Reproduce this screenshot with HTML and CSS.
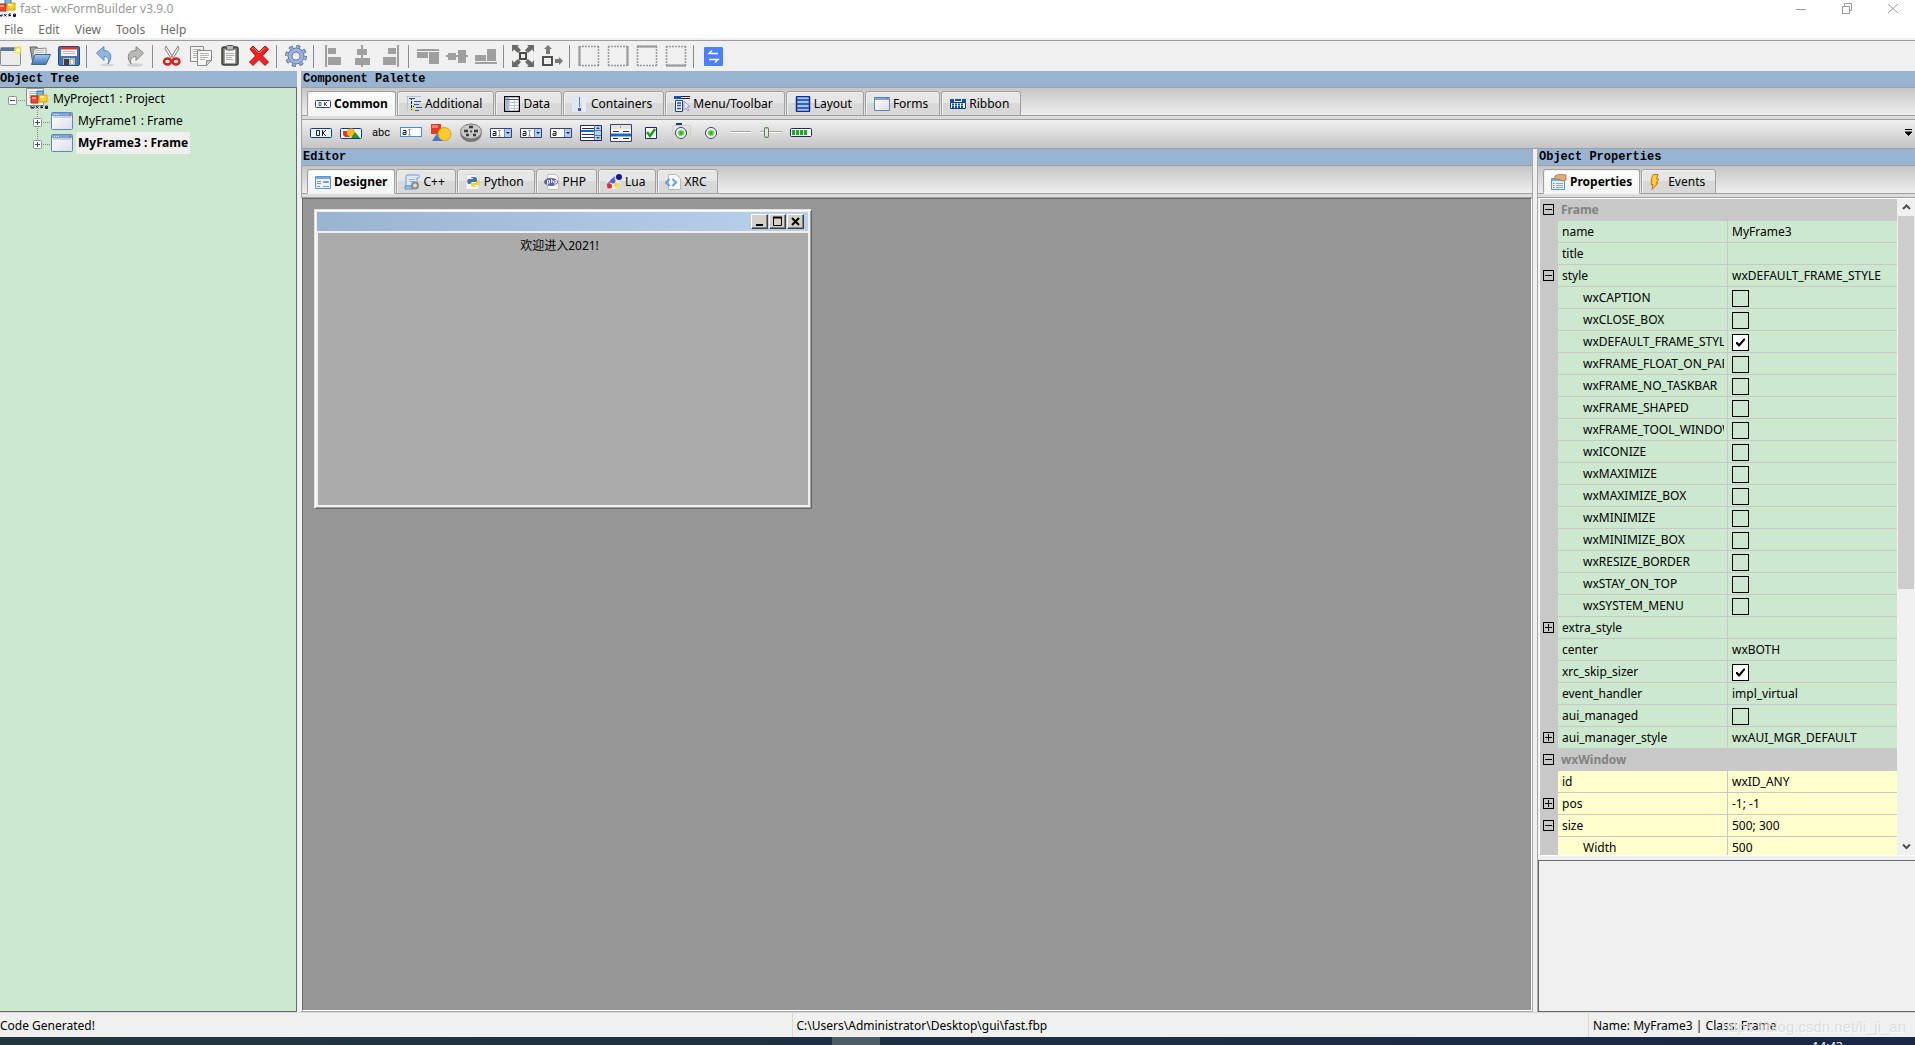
FILE: index.html
```html
<!DOCTYPE html>
<html lang="en">
<head>
<meta charset="utf-8">
<title>fast - wxFormBuilder v3.9.0</title>
<link rel="stylesheet" href="styles.css">
</head>
<body>
<svg class="defs" aria-hidden="true">
  <defs>
    <linearGradient id="gWin" x1="0" y1="0" x2="1" y2="1"><stop offset="0" stop-color="#fff"/><stop offset="1" stop-color="#dcdcec"/></linearGradient>
    <linearGradient id="gBlue" x1="0" y1="0" x2="0" y2="1"><stop offset="0" stop-color="#a9cbee"/><stop offset="1" stop-color="#3f75b5"/></linearGradient>
    <radialGradient id="gGreen"><stop offset="0" stop-color="#00b400"/><stop offset=".5" stop-color="#4fce40"/><stop offset="1" stop-color="#f4fff0"/></radialGradient>
  </defs>
  <symbol id="blocks" viewBox="0 0 22 22">
    <path d="M11 3h6v7h-6z" fill="#6fb4f0" stroke="#2b78c4"/><path d="M5 8h7v7H5z" fill="#ee4a32" stroke="#b7220f"/><path d="M13 7h8v7h-8z" fill="#fbd22c" stroke="#d99e0c"/><path d="M6 9h4v2H6z" fill="#ff9a86"/><path d="M14 8h4v2h-4z" fill="#fff3a0"/>
    <path d="M5 18v2h1.500v-1 1H8v-2M10 18l2.500 2.500M12.500 18L10 20.500M15 20.500V18h2M15 19.500h2M19.500 18v2.500h2V18h-2M20 19.500h2" fill="none" stroke="#101030"/>
  </symbol>
  <symbol id="project" viewBox="0 0 22 22">
    <path d="M.5.500h17v17H.500z" fill="#f4f4f4" stroke="#8f8f8f"/><path d="M3 3.500h11M3 5.500h8M3 7.500h9M3 9.500h5" stroke="#b5b5b5"/>
    <use href="#blocks" width="22" height="22"/>
  </symbol>
  <symbol id="frame" viewBox="0 0 22 18">
    <rect x=".5" y=".5" width="21" height="17" rx="1" fill="url(#gWin)" stroke="#5b86c4"/><path d="M1 1h20v3H1z" fill="#7ea6de"/><path d="M3 2.500h1M5 2.500h1M7 2.500h1" stroke="#dce9fa"/><path d="M18 2.500h2" stroke="#e2593f" stroke-width="2"/><path d="M2 5h18" stroke="#a9a9b5"/>
  </symbol>
  <symbol id="new" viewBox="0 0 22 22">
    <rect x=".5" y="2.500" width="20" height="18" rx="1" fill="#e9e9e9" stroke="#8b8d93"/><path d="M1 3h19v3H1z" fill="#54749c"/><path d="M2 7h17v12H2z" fill="#ebebea"/><circle cx="18" cy="5" r="4" fill="#f7ee4a" opacity=".75"/><circle cx="18" cy="5" r="2" fill="#ffffb0"/>
  </symbol>
  <symbol id="open" viewBox="0 0 22 22">
    <path d="M1 2h7l1 2h7v7L4 19z" fill="#a3a5a0" stroke="#5f615d"/><path d="M5 4l12-1v8H4z" fill="#f6f6f6" stroke="#8d8f8b"/><path d="M6 6l9-1M6 8l9-1" stroke="#b8b8b8"/><path d="M6 9.500h15.500L17 19.500H2.500z" fill="url(#gBlue)" stroke="#3465a4"/>
  </symbol>
  <symbol id="save" viewBox="0 0 22 22">
    <rect x=".5" y="1.500" width="21" height="19" rx="1.500" fill="#4673ae" stroke="#204a87"/><path d="M3 2h16v9H3z" fill="#f5f5f5"/><path d="M3 2h16v2.500H3z" fill="#e2352c"/><path d="M5 6.500h12M5 8.500h12" stroke="#bdbdbd"/><path d="M5 13h12v7H5z" fill="#b8bab5"/><path d="M6 14h5v6H6z" fill="#3c4147"/><path d="M13 15h2v4h-2z" fill="#eee"/>
  </symbol>
  <symbol id="undo" viewBox="0 0 22 22">
    <ellipse cx="12" cy="20" rx="7" ry="1.500" fill="#d4d4d4"/><path d="M1.500 8L9 1.500v4c7 0 9 7 4 13.500 1.500-5 0-7.500-4-7.500v4z" fill="#8fb6e2" stroke="#5a8ac3"/>
  </symbol>
  <symbol id="redo" viewBox="0 0 22 22">
    <ellipse cx="11" cy="20" rx="8" ry="1.700" fill="#cfcfcf"/><path d="M19.500 8L12 1.500v4C4 5.500 2 12 7 19c-1.500-5 1-7.500 5-7.500v4z" fill="#b9bbb7" stroke="#868884"/>
  </symbol>
  <symbol id="cut" viewBox="0 0 22 22">
    <path d="M5 1l8 13-2 1L4 4zM17 1L9 14l2 1 7-11z" fill="#e7e9e6" stroke="#8a8c88"/><ellipse cx="6.500" cy="16.500" rx="3.500" ry="3" fill="none" stroke="#dd1c1c" stroke-width="2.400"/><ellipse cx="15" cy="16.500" rx="3.500" ry="3" fill="none" stroke="#dd1c1c" stroke-width="2.400"/>
  </symbol>
  <symbol id="copy" viewBox="0 0 22 22">
    <path d="M.5 1.500h13v15H.500z" fill="#f3f3f2" stroke="#888a85"/><path d="M3 4.500h8M3 6.500h8M3 8.500h4M3 10.500h4M3 12.500h4" stroke="#b3b5b0"/><path d="M7.500 5.500h14v10l-5 5h-9z" fill="#f6f6f5" stroke="#888a85"/><path d="M10 8.500h9M10 10.500h9M10 12.500h8M10 14.500h5" stroke="#b3b5b0"/><path d="M21 15.500h-4.500V20" fill="#d0d2cd" stroke="#888a85"/>
  </symbol>
  <symbol id="paste" viewBox="0 0 22 22">
    <rect x="3" y="2" width="16" height="18" rx="2" fill="#70736e" stroke="#3f423d" stroke-width="1.500"/><path d="M5.500 4.500h11v14h-11z" fill="#f4f4f3" stroke="#9b9d99"/><path d="M7 8.500h8M7 10.500h8M7 12.500h6M7 14.500h7" stroke="#adafaa"/><rect x="7.500" y=".5" width="7" height="4.500" rx="1" fill="#b9bbb6" stroke="#50534e"/>
  </symbol>
  <symbol id="delete" viewBox="0 0 22 22">
    <path d="M2 4l3-3 6 6 6-6 3.500 3-6 7 6 6-3.500 3.500-6-6-6 6L1.500 17l6-6z" fill="#ee2222" stroke="#b80c0c"/><path d="M4 4l1.500-1.500 5.500 5.500 6-5.500" fill="none" stroke="#ff8a8a"/>
  </symbol>
  <symbol id="gear" viewBox="0 0 22 22">
    <circle cx="11" cy="11" r="9" fill="none" stroke="#5673a8" stroke-width="4" stroke-dasharray="3.770 3.300"/><circle cx="11" cy="11" r="6" fill="none" stroke="#5c78ac" stroke-width="5"/><circle cx="11" cy="11" r="6" fill="none" stroke="#9fb5da" stroke-width="3"/><circle cx="11" cy="11" r="9" fill="none" stroke="#9fb5da" stroke-width="2" stroke-dasharray="2.500 4.570" stroke-dashoffset="-.6"/>
  </symbol>
  <symbol id="al" viewBox="0 0 22 22"><path d="M3 0h2v22H3zM6 3h8v6H6zM6 12h13v8H6z" fill="#9f9f9f"/></symbol>
  <symbol id="ac" viewBox="0 0 22 22"><path d="M10 0h2v22h-2zM6 4h10v6H6zM4 13h15v7H4z" fill="#9f9f9f"/></symbol>
  <symbol id="ar" viewBox="0 0 22 22"><path d="M17 0h2v22h-2zM8 3h8v6H8zM3 12h13v8H3z" fill="#9f9f9f"/></symbol>
  <symbol id="at" viewBox="0 0 22 22"><path d="M0 4h22v2H0zM0 7h11v6H0zM12 7h10v12H12z" fill="#9f9f9f"/></symbol>
  <symbol id="am" viewBox="0 0 22 22"><path d="M0 10h22v2H0zM2 8h8v7H2zM12 5h8v13h-8z" fill="#9f9f9f"/></symbol>
  <symbol id="ab" viewBox="0 0 22 22"><path d="M0 17h22v2H0zM0 10h11v6H0zM12 4h9v12h-9z" fill="#9f9f9f"/></symbol>
  <symbol id="expand" viewBox="0 0 22 22"><path d="M0 0h7L5.500 1.500 9 5 6 8 2 4.500 0 7zM22 0v7l-2-2.500L16 8l-3-3 3.500-3.500L15 0zM0 22v-7l2 2.500L6 14l3 3-3.500 3.500L7 22zM22 22h-7l1.500-1.500L13 17l3-3 4 3.500 2-2.500z" fill="#6a6a67"/><path d="M8 8h6v6H8z" fill="#eee" stroke="#494946" stroke-width="2"/></symbol>
  <symbol id="stretch" viewBox="0 0 22 22"><path d="M2 12h9v8H2z" fill="none" stroke="#50504d" stroke-width="2"/><path d="M7 0l4 4H9v5H5V4H3zM22 16l-4 4v-2h-4v-4h4v-2z" fill="#7a7a77"/></symbol>
  <symbol id="dots" viewBox="0 0 22 22"><path d="M1 1.500h20M1 20.500h20M1.500 1v20M20.500 1v20" fill="none" stroke="#999" stroke-width="1.500" stroke-dasharray="2 1"/></symbol>
  <symbol id="bl" viewBox="0 0 22 22"><use href="#dots"/><path d="M1.500 1v20" stroke="#999" stroke-width="2"/></symbol>
  <symbol id="br" viewBox="0 0 22 22"><use href="#dots"/><path d="M20.500 1v20" stroke="#999" stroke-width="2"/></symbol>
  <symbol id="bt" viewBox="0 0 22 22"><use href="#dots"/><path d="M1 1.500h20" stroke="#999" stroke-width="2"/></symbol>
  <symbol id="bb" viewBox="0 0 22 22"><use href="#dots"/><path d="M1 20.500h20" stroke="#999" stroke-width="2"/></symbol>
  <symbol id="swap" viewBox="0 0 22 22"><rect x="2" y="2" width="19" height="19" rx="1" fill="#4d80f8"/><path d="M16 8.500H7l3-3M7 14.500h9l-3 3" fill="none" stroke="#fff" stroke-width="1.500"/></symbol>

  <symbol id="ok16" viewBox="0 0 16 16"><rect x=".5" y="4.500" width="15" height="7" rx="1" fill="#fff" stroke="#1d3f96"/><path d="M4 6.500h2v3H4zM9.500 6v4M12 6l-2 2 2 2" fill="none" stroke="#555"/></symbol>
  <symbol id="tree16" viewBox="0 0 16 16"><path d="M0 .5h15M1.500 0v15" stroke="#b5c4cf"/><path d="M3 2.500h6M8 5.500h7M8 8.500h5M10 11.500h6M9 14.500h4" stroke="#1d5a9e"/><path d="M5.500 3v12M5 6.500h2M5 10.500h3" stroke="#222" stroke-dasharray="1 1" fill="none"/><path d="M6 12h2v3H6z" fill="#e6dd3a"/></symbol>
  <symbol id="data16" viewBox="0 0 16 16"><path d="M.5.500h15v15H.500z" fill="#fff" stroke="#000" stroke-width="1.500"/><path d="M1.500 1.500h4v13h-4z" fill="#a9b5dc"/><path d="M1 3.500h14" stroke="#4e5a96"/><path d="M6 6.500h8M6 9.500h8M6 12.500h8M10.500 4v10" stroke="#b9c2de"/></symbol>
  <symbol id="cont16" viewBox="0 0 16 16"><path d="M0 0h9v16H0z" fill="#dfe7f3"/><path d="M10 0h4v16h-4z" fill="#e6ebf5"/><path d="M7.500 1v10" stroke="#5d7ec0"/><path d="M6 12h3v3H6z" fill="#3f5aa0"/></symbol>
  <symbol id="menu16" viewBox="0 0 16 16"><path d="M0 0h7v3H0z" fill="#0a50c8"/><path d="M7 .500h9M7 2.500h9" stroke="#223"/><path d="M1.500 4.500h7v11h-7z" fill="#fff" stroke="#2e3f78"/><path d="M3 7h4M3 9.500h4M3 12.500h4" stroke="#0a50c8" stroke-width="1.500"/><path d="M10 5v9l2-2 2 3 1-1-2-3h3z" fill="#f3f3fb" stroke="#9a9ad0"/></symbol>
  <symbol id="lay16" viewBox="0 0 16 16"><rect x="1.500" y=".5" width="13" height="15" rx="1" fill="#a9c3f4" stroke="#0a2f8c" stroke-width="1.500"/><path d="M2 4h12M2 8h12M2 12h12" stroke="#0d3fae" stroke-width="1.500"/></symbol>
  <symbol id="form16" viewBox="0 0 16 16"><path d="M.5 1.500h15v13H.500z" fill="url(#gWin)" stroke="#5b86c4"/><path d="M1 2h14v2H1z" fill="#7ea6de"/><path d="M12 2.500h2" stroke="#e2593f"/></symbol>
  <symbol id="rib16" viewBox="0 0 16 16"><path d="M0 3h4v3H0zM5 3h6v2H5zM12 3h4v3h-4z" fill="#0a50b8"/><path d="M.5 6.500h15v6H.500z" fill="#fff" stroke="#14397c"/><path d="M2 8.500h12M2 11h12" stroke="#0a50b8" stroke-width="2" stroke-dasharray="2 1"/></symbol>
  <symbol id="des16" viewBox="0 0 16 16"><path d="M.5 2.500h15v12H.500z" fill="#eef4fc" stroke="#5e94cf"/><path d="M1 3h14v2H1z" fill="#75a8e0"/><path d="M2 7.500h4M2 9.500h4M2 12.500h3" stroke="#7e97bb"/><path d="M8.500 7.500h5v1h-5zM8 12.500h6" fill="none" stroke="#6fa0dc"/></symbol>
  <symbol id="cpp16" viewBox="0 0 16 16"><path d="M3 1h11c2 0 2 3 0 3h-1v8H2V3c0-1 0-2 1-2z" fill="#d8e8f7" stroke="#6b9dcc"/><path d="M1 12h8v3H1z" fill="#9cc3e8" stroke="#5d8fc4"/><path d="M5 5.500h6M5 7.500h6" stroke="#92b4d6"/><circle cx="11" cy="11.500" r="3" fill="#ddd" stroke="#8b8b8b" stroke-width="2"/></symbol>
  <symbol id="py16" viewBox="0 0 16 16"><path d="M1 .5h9l4 4v11H1z" fill="#f7f7f7" stroke="#d2d2d2"/><path d="M6 3h4c1 0 2 1 2 2v3H7L5 10H3c-1-2-1-4 0-5h5V4H6z" fill="#3b74a8"/><path d="M11 13H8c-1 0-2-1-2-2V9h5l1-3h2c1 2 1 4 0 5H9v1h2z" fill="#f8ce3e"/></symbol>
  <symbol id="php16" viewBox="0 0 16 16"><path d="M3.500.5h8l3 3v12h-11z" fill="#f7f7f7" stroke="#bfbfbf"/><ellipse cx="7" cy="8" rx="7" ry="4" fill="#5a62a6"/><path d="M3.500 11V6.500h2v2.500h-2M7.500 5v4M7.500 7h2v2M11 11V6.500h1.500V9H11" fill="none" stroke="#e8e8f8"/></symbol>
  <symbol id="lua16" viewBox="0 0 16 16"><circle cx="7" cy="9" r="6.500" fill="#ececec"/><path d="M1 11L9 3" stroke="#9a6dd0" stroke-width="2"/><circle cx="13" cy="3" r="3" fill="#16168c"/><circle cx="3.500" cy="12" r="2.500" fill="#ee2a2a"/><circle cx="7" cy="7" r="2.500" fill="#4c62e8"/><circle cx="10.500" cy="11" r="2.500" fill="#f5dd2a"/></symbol>
  <symbol id="xrc16" viewBox="0 0 16 16"><path d="M3.500.5h8l4 4v11h-12z" fill="#f8f8f8" stroke="#b8b8b8"/><path d="M4.500 5L1 8.500 4.500 12M7.500 5L11 8.500 7.500 12" fill="none" stroke="#5ba3e0" stroke-width="2"/></symbol>
  <symbol id="prop16" viewBox="0 0 16 16"><path d="M.5 4.500h13v11H.500z" fill="#edf4fc" stroke="#5a93cf"/><path d="M1 5h12v2H1z" fill="#78aadf"/><path d="M5 9.500h7M5 11.500h7M5 13.500h7" stroke="#88a7c9"/><path d="M2 9.500h1.500M2 13.500h1.500" stroke="#35a04a"/><path d="M2 11.500h1.500" stroke="#d04a35"/><path d="M4 2l4-2 7 1v5l-4 1-3-2-4 0z" fill="#dfae78" stroke="#a8743e" stroke-width=".8"/></symbol>
  <symbol id="ev16" viewBox="0 0 16 16"><path d="M4 .5h5L7.500 5H10L7 9h2l-6 6.500 1-5H2l1-4H2z" fill="#fbd530" stroke="#d66a1c"/></symbol>

  <symbol id="pOk" viewBox="0 0 22 22"><rect x=".5" y="6.500" width="21" height="9" rx="1" fill="#eef5ff" stroke="#0d3a8f"/><path d="M6.500 8.500h3v5h-3zM12.500 8v6M16 8l-3 3 3 3" fill="none" stroke="#222"/></symbol>
  <symbol id="pBmp" viewBox="0 0 22 22"><rect x=".5" y="6.500" width="21" height="10" rx="1" fill="#eef5ff" stroke="#0d3a8f"/><path d="M3 9h7v6H5l-2-2z" fill="#e23a1e"/><circle cx="11" cy="10.500" r="4" fill="#f8b81e"/><path d="M11 16l4-6 5 6z" fill="#1f9c2b"/></symbol>
  <symbol id="pTxt" viewBox="0 0 22 22"><rect x=".5" y="5.500" width="21" height="9" fill="#fff" stroke="#3f94d8"/><path d="M3 8.500h3v4H3v-2h3" fill="none" stroke="#222"/><path d="M8 7.500h3M9.500 8v5M8 13h3" stroke="#999" fill="none"/></symbol>
  <symbol id="pImg" viewBox="0 0 22 22"><path d="M1 2h10v10H1z" fill="#e8381f"/><path d="M2 3h6v3H2z" fill="#f4806c"/><path d="M2 19l6-9 6 9z" fill="#4a78c8"/><circle cx="14.500" cy="12" r="6.500" fill="#fccb2e" stroke="#d99e18"/></symbol>
  <symbol id="pReel" viewBox="0 0 22 22"><ellipse cx="11" cy="12.500" rx="10.500" ry="7.500" fill="#777"/><ellipse cx="11" cy="9.500" rx="10.500" ry="7.500" fill="#c9c9c9" stroke="#777"/><path d="M4 9h4M14 9h4M9 5h4M6 13h3M13 13h3" stroke="#3a3a3a" stroke-width="2.500"/><circle cx="11" cy="9.500" r="1" fill="#333"/></symbol>
  <symbol id="pCmb" viewBox="0 0 22 22"><path d="M.5 6.500h21v9H.500z" fill="#fff" stroke="#3b3f78"/><path d="M3 9.500h3v4H3v-2h3" fill="none" stroke="#222"/><path d="M8 8.500h3M9.500 9v5M8 14h3" stroke="#999" fill="none"/><path d="M15 7h6v8h-6z" fill="#a9cdf0"/><path d="M14.500 7v8" stroke="#6a90bc"/><path d="M16 10h4l-2 2z" fill="#222"/></symbol>
  <symbol id="pCho" viewBox="0 0 22 22"><path d="M.5 6.500h21v9H.500z" fill="#fff" stroke="#3b3f78"/><path d="M3 9.500h3v4H3v-2h3" fill="none" stroke="#222"/><path d="M15 7h6v8h-6z" fill="#a9cdf0"/><path d="M14.500 7v8" stroke="#6a90bc"/><path d="M16 10h4l-2 2z" fill="#222"/></symbol>
  <symbol id="pLst" viewBox="0 0 22 22"><path d="M.5 3.500h21v15H.500z" fill="#fff" stroke="#23285e"/><path d="M2 6.500h12M2 12.500h12M2 15.500h12" stroke="#23285e"/><path d="M1 9h13" stroke="#0d6ad0" stroke-width="2"/><path d="M15 4h6v14h-6z" fill="#b4d3ee"/><path d="M14.500 3v15M15 8.500h6M15 13.500h6" stroke="#5a7aa6"/><path d="M16 7l2-2 2 2zM16 15l2 2 2-2z" fill="#444"/></symbol>
  <symbol id="pLct" viewBox="0 0 22 22"><path d="M.5 2.500h21v17H.500z" fill="#fff" stroke="#3b3f78"/><path d="M1 3h20v4H1z" fill="#e9e5d4"/><path d="M1 13h20" stroke="#0d6ad0" stroke-width="3"/><path d="M3 9.500h6M13 9.500h6M3 16.500h5M13 16.500h6" stroke="#333"/><path d="M10.500 4v2" stroke="#998"/></symbol>
  <symbol id="pChk" viewBox="0 0 22 22"><path d="M5.500 5.500h11v11h-11z" fill="#fff" stroke="#23285e"/><path d="M7 10l3 4 5-7" fill="none" stroke="#12a012" stroke-width="2.500"/></symbol>
  <symbol id="pRbx" viewBox="0 0 22 22"><rect x="2.500" y="3.500" width="18" height="16" rx="2" fill="none" stroke="#d3d1bd"/><path d="M6 1h6v2H6z" fill="#0d3a8f"/><circle cx="11" cy="11" r="5.500" fill="#fff" stroke="#3d3f66"/><circle cx="11" cy="11" r="4" fill="url(#gGreen)"/></symbol>
  <symbol id="pRad" viewBox="0 0 22 22"><circle cx="11" cy="11" r="5.500" fill="#fff" stroke="#3d3f66"/><circle cx="11" cy="11" r="4" fill="url(#gGreen)"/></symbol>
  <symbol id="pLin" viewBox="0 0 22 22"><path d="M1 9.500h20" stroke="#a7a596"/><path d="M1 10.500h20" stroke="#fff"/></symbol>
  <symbol id="pSld" viewBox="0 0 22 22"><path d="M0 9.500h22" stroke="#aaa896"/><path d="M0 10.500h21" stroke="#fffde8"/><rect x="4.500" y="5.500" width="4" height="10" rx="1" fill="#e4e4d8" stroke="#6d7466"/><path d="M5 6h3M5 15h3" stroke="#35b52f"/></symbol>
  <symbol id="pGau" viewBox="0 0 22 22"><rect x=".5" y="6.500" width="21" height="8" rx="1" fill="#fff" stroke="#23285e"/><path d="M2 10.500h16" stroke="#19b019" stroke-width="5" stroke-dasharray="3 1"/></symbol>
</svg>

<div class="app">
  <header class="titlebar">
    <svg class="i22"><use href="#blocks"/></svg>
    <h1 class="title">fast - wxFormBuilder v3.9.0</h1>
    <div class="winctl">
      <button aria-label="Minimize"><svg width="12" height="12"><path d="M1 7.500h10" stroke="#999"/></svg></button>
      <button aria-label="Restore"><svg width="12" height="12" fill="none" stroke="#999"><path d="M1.500 4.500h7v7h-7zM3.500 4V1.500h7v7H9"/></svg></button>
      <button aria-label="Close"><svg width="12" height="12"><path d="M1 2l10 9M11 2L1 11" stroke="#999"/></svg></button>
    </div>
  </header>
  <nav class="menubar">
    <button>File</button><button>Edit</button><button>View</button><button>Tools</button><button>Help</button>
  </nav>
  <div class="toolbar" role="toolbar">
    <button aria-label="New"><svg class="i22"><use href="#new"/></svg></button>
    <button aria-label="Open"><svg class="i22"><use href="#open"/></svg></button>
    <button aria-label="Save"><svg class="i22"><use href="#save"/></svg></button>
    <i class="sep"></i>
    <button aria-label="Undo"><svg class="i22"><use href="#undo"/></svg></button>
    <button aria-label="Redo"><svg class="i22"><use href="#redo"/></svg></button>
    <i class="sep"></i>
    <button aria-label="Cut"><svg class="i22"><use href="#cut"/></svg></button>
    <button aria-label="Copy"><svg class="i22"><use href="#copy"/></svg></button>
    <button aria-label="Paste"><svg class="i22"><use href="#paste"/></svg></button>
    <button aria-label="Delete"><svg class="i22"><use href="#delete"/></svg></button>
    <i class="sep"></i>
    <button aria-label="Generate code"><svg class="i22"><use href="#gear"/></svg></button>
    <i class="sep"></i>
    <button aria-label="Align left"><svg class="i22"><use href="#al"/></svg></button>
    <button aria-label="Align center horizontally"><svg class="i22"><use href="#ac"/></svg></button>
    <button aria-label="Align right"><svg class="i22"><use href="#ar"/></svg></button>
    <i class="sep"></i>
    <button aria-label="Align top"><svg class="i22"><use href="#at"/></svg></button>
    <button aria-label="Align center vertically"><svg class="i22"><use href="#am"/></svg></button>
    <button aria-label="Align bottom"><svg class="i22"><use href="#ab"/></svg></button>
    <i class="sep"></i>
    <button aria-label="Expand"><svg class="i22"><use href="#expand"/></svg></button>
    <button aria-label="Stretch"><svg class="i22"><use href="#stretch"/></svg></button>
    <i class="sep"></i>
    <button aria-label="Left border"><svg class="i22"><use href="#bl"/></svg></button>
    <button aria-label="Right border"><svg class="i22"><use href="#br"/></svg></button>
    <button aria-label="Top border"><svg class="i22"><use href="#bt"/></svg></button>
    <button aria-label="Bottom border"><svg class="i22"><use href="#bb"/></svg></button>
    <i class="sep"></i>
    <button aria-label="Swap"><svg class="i22"><use href="#swap"/></svg></button>
  </div>

  <main class="work">
    <section class="side">
      <h2 class="caption">Object Tree</h2>
      <ul class="tree">
        <li>
          <div class="node">
            <svg class="twig" width="26" height="22"><path d="M18 12.500h8" class="dot"/><rect x="8.500" y="8.500" width="8" height="8" rx="1" class="exp"/><path d="M10 12.500h5" class="sign"/></svg>
            <svg class="i22"><use href="#project"/></svg><span class="label">MyProject1 : Project</span>
          </div>
          <ul>
            <li class="node">
              <svg class="twig" width="26" height="22"><path d="M12.500 0v22M18 12.500h8" class="dot"/><rect x="8.500" y="8.500" width="8" height="8" rx="1" class="exp"/><path d="M10 12.500h5M12.500 10v5" class="sign"/></svg>
              <svg class="i18"><use href="#frame"/></svg><span class="label">MyFrame1 : Frame</span>
            </li>
            <li class="node">
              <svg class="twig" width="26" height="22"><path d="M12.500 0v8M18 12.500h8" class="dot"/><rect x="8.500" y="8.500" width="8" height="8" rx="1" class="exp"/><path d="M10 12.500h5M12.500 10v5" class="sign"/></svg>
              <svg class="i18"><use href="#frame"/></svg><span class="label selected">MyFrame3 : Frame</span>
            </li>
          </ul>
        </li>
      </ul>
    </section>

    <div class="center">
      <section>
        <h2 class="caption">Component Palette</h2>
        <div class="tabs roomy" role="tablist">
          <button class="tab on" role="tab"><svg class="i16"><use href="#ok16"/></svg>Common</button>
          <button class="tab" role="tab"><svg class="i16"><use href="#tree16"/></svg>Additional</button>
          <button class="tab" role="tab"><svg class="i16"><use href="#data16"/></svg>Data</button>
          <button class="tab" role="tab"><svg class="i16"><use href="#cont16"/></svg>Containers</button>
          <button class="tab" role="tab"><svg class="i16"><use href="#menu16"/></svg>Menu/Toolbar</button>
          <button class="tab" role="tab"><svg class="i16"><use href="#lay16"/></svg>Layout</button>
          <button class="tab" role="tab"><svg class="i16"><use href="#form16"/></svg>Forms</button>
          <button class="tab" role="tab"><svg class="i16"><use href="#rib16"/></svg>Ribbon</button>
        </div>
        <div class="palette" role="toolbar">
          <button aria-label="Button"><svg class="i22"><use href="#pOk"/></svg></button>
          <button aria-label="Bitmap button"><svg class="i22"><use href="#pBmp"/></svg></button>
          <button class="abc">abc</button>
          <button aria-label="Text control"><svg class="i22"><use href="#pTxt"/></svg></button>
          <button aria-label="Static bitmap"><svg class="i22"><use href="#pImg"/></svg></button>
          <button aria-label="Animation"><svg class="i22"><use href="#pReel"/></svg></button>
          <button aria-label="Combo box"><svg class="i22"><use href="#pCmb"/></svg></button>
          <button aria-label="Bitmap combo box"><svg class="i22"><use href="#pCmb"/></svg></button>
          <button aria-label="Choice"><svg class="i22"><use href="#pCho"/></svg></button>
          <button aria-label="List box"><svg class="i22"><use href="#pLst"/></svg></button>
          <button aria-label="List control"><svg class="i22"><use href="#pLct"/></svg></button>
          <button aria-label="Check box"><svg class="i22"><use href="#pChk"/></svg></button>
          <button aria-label="Radio box"><svg class="i22"><use href="#pRbx"/></svg></button>
          <button aria-label="Radio button"><svg class="i22"><use href="#pRad"/></svg></button>
          <button aria-label="Static line"><svg class="i22"><use href="#pLin"/></svg></button>
          <button aria-label="Slider"><svg class="i22"><use href="#pSld"/></svg></button>
          <button aria-label="Gauge"><svg class="i22"><use href="#pGau"/></svg></button>
          <button class="more" aria-label="More"><svg width="8" height="8"><path d="M0 .500h7M0 3h7L3.500 6.500z" stroke="#000" stroke-width="1"/></svg></button>
        </div>
      </section>

      <div class="split">
        <section class="editor">
          <h2 class="caption">Editor</h2>
          <div class="tabs" role="tablist">
            <button class="tab on" role="tab"><svg class="i16"><use href="#des16"/></svg>Designer</button>
            <button class="tab" role="tab"><svg class="i16"><use href="#cpp16"/></svg>C++</button>
            <button class="tab" role="tab"><svg class="i16"><use href="#py16"/></svg>Python</button>
            <button class="tab" role="tab"><svg class="i16"><use href="#php16"/></svg>PHP</button>
            <button class="tab" role="tab"><svg class="i16"><use href="#lua16"/></svg>Lua</button>
            <button class="tab" role="tab"><svg class="i16"><use href="#xrc16"/></svg>XRC</button>
          </div>
          <div class="canvas">
            <div class="preview">
              <div class="preview-bar">
                <button aria-label="Minimize"><svg width="11" height="11"><path d="M1 9h7" stroke="#000" stroke-width="2"/></svg></button>
                <button aria-label="Maximize"><svg width="11" height="11"><path d="M.5 1.500h8v8h-8z" fill="none" stroke="#000"/><path d="M0 1.500h9" stroke="#000" stroke-width="2"/></svg></button>
                <button aria-label="Close"><svg width="11" height="11"><path d="M1 2l7 7M8 2L1 9" stroke="#000" stroke-width="2"/></svg></button>
              </div>
              <div class="preview-body">欢迎进入2021!</div>
            </div>
          </div>
        </section>

        <section class="props">
          <h2 class="caption">Object Properties</h2>
          <div class="tabs" role="tablist">
            <button class="tab on" role="tab"><svg class="i16"><use href="#prop16"/></svg>Properties</button>
            <button class="tab" role="tab"><svg class="i16"><use href="#ev16"/></svg>Events</button>
          </div>
          <div class="gridwrap">
            <div class="gridclip">
              <table class="grid">
                <colgroup><col class="c-gut"><col class="c-name"><col></colgroup>
                <tbody>
                  <tr class="cat"><td><i class="box"></i></td><th colspan="2">Frame</th></tr>
                  <tr><td></td><th>name</th><td>MyFrame3</td></tr>
                  <tr><td></td><th>title</th><td></td></tr>
                  <tr><td><i class="box"></i></td><th>style</th><td>wxDEFAULT_FRAME_STYLE</td></tr>
                  <tr class="sub"><td></td><th><label for="s1">wxCAPTION</label></th><td><input type="checkbox" id="s1"></td></tr>
                  <tr class="sub"><td></td><th><label for="s2">wxCLOSE_BOX</label></th><td><input type="checkbox" id="s2"></td></tr>
                  <tr class="sub"><td></td><th><label for="s3">wxDEFAULT_FRAME_STYLE</label></th><td><input type="checkbox" id="s3" checked></td></tr>
                  <tr class="sub"><td></td><th><label for="s4">wxFRAME_FLOAT_ON_PARENT</label></th><td><input type="checkbox" id="s4"></td></tr>
                  <tr class="sub"><td></td><th><label for="s5">wxFRAME_NO_TASKBAR</label></th><td><input type="checkbox" id="s5"></td></tr>
                  <tr class="sub"><td></td><th><label for="s6">wxFRAME_SHAPED</label></th><td><input type="checkbox" id="s6"></td></tr>
                  <tr class="sub"><td></td><th><label for="s7">wxFRAME_TOOL_WINDOW</label></th><td><input type="checkbox" id="s7"></td></tr>
                  <tr class="sub"><td></td><th><label for="s8">wxICONIZE</label></th><td><input type="checkbox" id="s8"></td></tr>
                  <tr class="sub"><td></td><th><label for="s9">wxMAXIMIZE</label></th><td><input type="checkbox" id="s9"></td></tr>
                  <tr class="sub"><td></td><th><label for="s10">wxMAXIMIZE_BOX</label></th><td><input type="checkbox" id="s10"></td></tr>
                  <tr class="sub"><td></td><th><label for="s11">wxMINIMIZE</label></th><td><input type="checkbox" id="s11"></td></tr>
                  <tr class="sub"><td></td><th><label for="s12">wxMINIMIZE_BOX</label></th><td><input type="checkbox" id="s12"></td></tr>
                  <tr class="sub"><td></td><th><label for="s13">wxRESIZE_BORDER</label></th><td><input type="checkbox" id="s13"></td></tr>
                  <tr class="sub"><td></td><th><label for="s14">wxSTAY_ON_TOP</label></th><td><input type="checkbox" id="s14"></td></tr>
                  <tr class="sub"><td></td><th><label for="s15">wxSYSTEM_MENU</label></th><td><input type="checkbox" id="s15"></td></tr>
                  <tr><td><i class="box plus"></i></td><th>extra_style</th><td></td></tr>
                  <tr><td></td><th>center</th><td>wxBOTH</td></tr>
                  <tr><td></td><th><label for="p1">xrc_skip_sizer</label></th><td><input type="checkbox" id="p1" checked></td></tr>
                  <tr><td></td><th>event_handler</th><td>impl_virtual</td></tr>
                  <tr><td></td><th><label for="p2">aui_managed</label></th><td><input type="checkbox" id="p2"></td></tr>
                  <tr><td><i class="box plus"></i></td><th>aui_manager_style</th><td>wxAUI_MGR_DEFAULT</td></tr>
                </tbody>
                <tbody class="win">
                  <tr class="cat"><td><i class="box"></i></td><th colspan="2">wxWindow</th></tr>
                  <tr><td></td><th>id</th><td>wxID_ANY</td></tr>
                  <tr><td><i class="box plus"></i></td><th>pos</th><td>-1; -1</td></tr>
                  <tr><td><i class="box"></i></td><th>size</th><td>500; 300</td></tr>
                  <tr class="sub"><td></td><th>Width</th><td>500</td></tr>
                </tbody>
              </table>
            </div>
            <div class="scroll">
              <button aria-label="Scroll up"><svg width="9" height="7"><path d="M1 5l3.500-3.500L8 5" fill="none" stroke="#505050" stroke-width="2"/></svg></button>
              <div class="track"><div class="thumb"></div></div>
              <button aria-label="Scroll down"><svg width="9" height="7"><path d="M1 1.500L4.500 5 8 1.500" fill="none" stroke="#505050" stroke-width="2"/></svg></button>
            </div>
          </div>
          <div class="desc"></div>
        </section>
      </div>
    </div>
  </main>

  <footer class="status">
    <span>Code Generated!</span>
    <span>C:\Users\Administrator\Desktop\gui\fast.fbp</span>
    <span>Name: MyFrame3 | Class: Frame</span>
    <div class="watermark">https://blog.csdn.net/li_ji_an</div>
  </footer>
  <div class="taskbar"><i class="task"></i><span class="clock">14:43</span></div>
</div>
</body>
</html>
```
FILE: styles.css
```css
* { box-sizing: border-box; }

body {
  margin: 0;
  font: 12px/16px "Noto Sans", "Noto Sans CJK SC", sans-serif;
  color: #000;
  background: #f0f0f0;
}

button {
  margin: 0;
  padding: 0;
  border: 0;
  background: none;
  font: inherit;
  color: inherit;
}

ul { margin: 0; padding: 0; list-style: none; }
svg { flex: none; display: block; }
.defs { position: absolute; width: 0; height: 0; }
.i22 { width: 22px; height: 22px; }
.i18 { width: 22px; height: 18px; }
.i16 { width: 16px; height: 16px; }

.app { display: flex; flex-direction: column; height: 100vh; overflow: hidden; }

/* Title bar and menu */
.titlebar { display: flex; align-items: center; height: 18px; padding-right: 16px; background: #fff; color: #999; }
.titlebar > svg { margin: -4px 4px 0 -6px; }
.title { flex: 1; margin: 0; font-size: 12px; font-weight: 400; }
.winctl { display: flex; gap: 34px; margin-top: -2px; }
.menubar { display: flex; height: 22px; padding: 3px 4px 0; gap: 15px; background: #fff; color: #6a6a6a; border-bottom: 2px solid #f0f0f0; }

/* Main toolbar */
.toolbar { display: flex; height: 31px; border-top: 1px solid #9c9c9c; margin-left: -4px; }
.toolbar button { width: 29px; display: grid; place-items: center; }
.sep { width: 8px; padding: 4px 3px; }
.sep::before { content: ""; display: block; height: 23px; border-left: 1px solid #8c8c8c; }

/* Docked panes */
.work { flex: 1; display: flex; gap: 4px; min-height: 0; }
.side { width: 297px; display: flex; flex-direction: column; }
.center { flex: 1; display: flex; flex-direction: column; min-width: 0; }
.split { flex: 1; display: flex; gap: 4px; min-height: 0; }
.editor { flex: 1; display: flex; flex-direction: column; border: solid #a8a8a8; border-width: 0 1px 1px 0; }
.props { width: 378px; display: flex; flex-direction: column; border-left: 1px solid #a8a8a8; }
.caption { margin: 0; height: 16px; background: #99b4d1; font: bold 12px/16px "Liberation Mono", monospace; }
.center .caption { padding-left: 2px; }
.center .props .caption { padding-left: 1px; }

/* Object tree */
.tree { flex: 1; background: #cce8cf; border: solid #696969; border-width: 1px 1px 1px 0; }
.tree ul { padding-left: 25px; }
.node { display: flex; align-items: center; height: 22px; }
.label { padding: 3px 2px; margin-left: 3px; }
.selected { background: #f0f0f0; font-weight: 700; }
.dot { stroke: #888; stroke-dasharray: 1 1; }
.exp { fill: #fbfbfb; stroke: #919191; }
.sign { stroke: #3a4a9c; }

/* Notebook tabs */
.tabs {
  display: flex;
  height: 33px;
  padding: 3px 5px 0;
  gap: 1px;
  border: solid #a0a0a0;
  border-width: 1px 0 1px 1px;
  background: linear-gradient(#a0a0a0, #a0a0a0) 0 27px / 100% 1px no-repeat, linear-gradient(#c6c6c6, #eee 27px, #dcdcdc 28px);
}
.props .tabs { border-left: 0; }
.tab {
  display: flex;
  align-items: center;
  gap: 3px;
  height: 25px;
  padding: 0 10px 0 7px;
  border: 1px solid #a0a0a0;
  border-radius: 3px 3px 0 0;
  background: linear-gradient(#e6e6e6 50%, #d8d8d8 50%);
  box-shadow: inset 1px 1px #f0f0f0;
}
.roomy .tab { padding: 0 11px 0 8px; }
.tabs .tab.on { padding: 0 7px; background: linear-gradient(#fff, #f4f4f4); font-weight: 700; border-bottom-color: #f4f4f4; }

.palette {
  display: flex;
  height: 29px;
  padding: 0 2px 2px 4px;
  border: solid #a0a0a0;
  border-width: 0 0 1px 1px;
  background: linear-gradient(#f0f0f0, #c4c4c4);
}
.palette button { width: 30px; display: grid; place-items: center; }
.palette .abc { font: 11px/16px Roboto, sans-serif; }
.palette .more { width: 8px; margin-left: auto; }

/* Designer canvas */
.canvas { flex: 1; margin-left: 1px; padding: 10px 11px; background: #969696; border: solid; border-width: 1px; border-color: #696969 #fff #fff #696969; }
.preview {
  width: 493px;
  max-width: 100%;
  height: 300px;
  display: flex;
  flex-direction: column;
  padding: 1px 2px 2px 1px;
  border: 1px solid;
  border-color: #e3e3e3 #696969 #696969 #e3e3e3;
  background: #f0f0f0;
  box-shadow: inset 1px 1px #fff, inset -1px -1px #a0a0a0;
  box-sizing: content-box;
  height: 295px;
}
.preview-bar { display: flex; justify-content: flex-end; gap: 1px; height: 20px; margin: 1px; padding: 2px 4px; background: linear-gradient(90deg, #99b4d1, #b9d1ea); border-bottom: 1px solid #f0f0f0; }
.preview-bar button { width: 17px; height: 15px; padding: 1px 3px; background: #d4d0c8; border: 1px solid; border-color: #fff #404040 #404040 #fff; box-shadow: inset -1px -1px #808080; }
.preview-body { flex: 1; margin: 0 1px 1px 2px; padding: 5px 12px 5px 5px; background: #ababab; text-align: center; }

/* Property grid */
.gridwrap { flex: 1; display: flex; min-height: 0; margin-left: 1px; border: solid #fff; border-width: 1px 0 1px 1px; background: #f0f0f0; }
.gridclip { flex: 1; overflow: hidden; background: #c8c8c8; }
.grid { width: 100%; table-layout: fixed; border-collapse: separate; border-spacing: 0; }
.c-gut { width: 18px; }
.c-name { width: 170px; }
.grid td, .grid th { height: 22px; padding: 0 4px; line-height: 21px; text-align: left; font-weight: 400; white-space: nowrap; overflow: hidden; background: #cce8cf; border-bottom: 1px solid #c8c8c8; }
.grid th { border-right: 1px solid #c8c8c8; }
.grid .sub th { padding: 0 3px 0 25px; }
.grid label { display: block; overflow: hidden; }
.grid td:first-child { padding: 0 3px; background: #c8c8c8; }
.grid .win td, .grid .win th { background: #ffffce; }
.grid .win td:first-child { background: #c8c8c8; }
.grid .cat th { background: #c8c8c8; color: #828282; font-weight: 700; padding-left: 3px; }
.box { display: block; width: 11px; height: 11px; border: 1px solid #000; background: linear-gradient(#000, #000) center / 7px 1px no-repeat; }
.box.plus { background: linear-gradient(#000, #000) center / 7px 1px no-repeat, linear-gradient(#000, #000) center / 1px 7px no-repeat; }
.grid input { appearance: none; display: block; width: 17px; height: 17px; margin: 2px 0 0; border: 1px solid #000; }
.grid input:checked { background: #fff; }
.grid input:checked::after { content: ""; display: block; width: 9px; height: 9px; margin: 3px; background: #000; clip-path: polygon(0 45%, 15% 45%, 35% 65%, 85% 5%, 100% 5%, 100% 22%, 40% 95%, 30% 95%, 0 65%); }

.scroll { width: 17px; display: flex; flex-direction: column; margin-left: 1px; }
.scroll button { height: 17px; display: grid; place-items: center; }
.track { flex: 1; }
.thumb { height: 60%; background: #cdcdcd; margin-right: 1px; }
.desc { height: 152px; margin-top: 4px; border: solid #696969; border-width: 1px 0 1px 1px; }

/* Status bar and the strip of desktop taskbar */
.status { position: relative; display: flex; height: 25px; line-height: 26px; border-top: 1px solid #d7d7d7; }
.status span { flex: 1; padding-left: 4px; border-left: 1px solid #d7d7d7; white-space: nowrap; }
.status span:first-child { padding-left: 0; border-left: 0; }
.status span:nth-child(3) { flex: 0 0 327px; }
.watermark { position: absolute; right: 9px; bottom: -2px; font: 15px/24px "Liberation Sans", sans-serif; color: rgba(215, 215, 215, .8); text-shadow: 1px 1px rgba(255, 255, 255, .6); }
.taskbar { display: flex; justify-content: space-between; height: 8px; padding: 0 72px 0 832px; overflow: hidden; background: linear-gradient(90deg, #22363f, #1a2745); color: #fff; }
.task { width: 48px; background: #4c5d66; }
.clock { padding-top: 2px; line-height: 16px; }
```
